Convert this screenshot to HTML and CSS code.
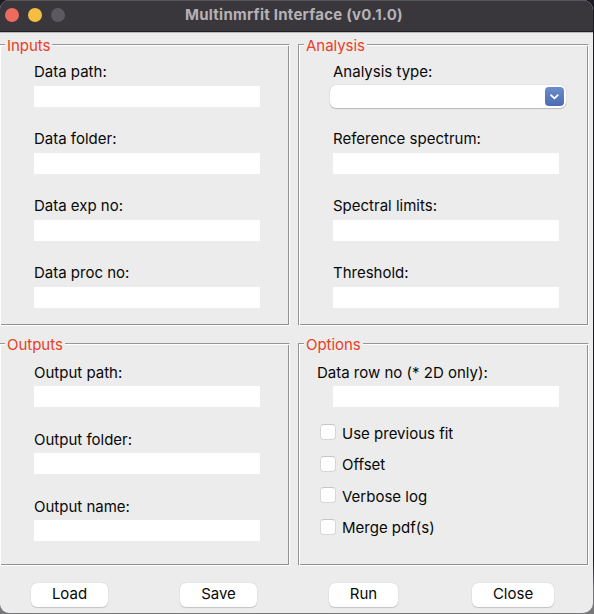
FILE: index.html
```html
<!DOCTYPE html>
<html lang="en">
<head>
<meta charset="utf-8">
<title>Multinmrfit Interface (v0.1.0)</title>
<link rel="stylesheet" href="styles.css">
</head>
<body>
<div class="window">
  <header class="titlebar">
    <div class="lights"><i class="light red"></i><i class="light yellow"></i><i class="light gray"></i></div>
    <h1>Multinmrfit Interface (v0.1.0)</h1>
  </header>
  <main class="panels">
    <section class="panel left upper">
      <h2>Inputs</h2>
      <div class="field"><label>Data path:</label><div class="input"></div></div>
      <div class="field"><label>Data folder:</label><div class="input"></div></div>
      <div class="field"><label>Data exp no:</label><div class="input"></div></div>
      <div class="field"><label>Data proc no:</label><div class="input"></div></div>
    </section>
    <section class="panel upper">
      <h2>Analysis</h2>
      <div class="field"><label>Analysis type:</label>
        <div class="select"><span class="arrow"><svg width="19" height="19" viewBox="0 0 19 19"><path d="M6 8.2 9.4 11.4 12.8 8.2" fill="none" stroke="#fff" stroke-width="1.8" stroke-linecap="round" stroke-linejoin="round"/></svg></span></div>
      </div>
      <div class="field"><label>Reference spectrum:</label><div class="input"></div></div>
      <div class="field"><label>Spectral limits:</label><div class="input"></div></div>
      <div class="field"><label>Threshold:</label><div class="input"></div></div>
    </section>
    <section class="panel left lower">
      <h2>Outputs</h2>
      <div class="field"><label>Output path:</label><div class="input"></div></div>
      <div class="field"><label>Output folder:</label><div class="input"></div></div>
      <div class="field"><label>Output name:</label><div class="input"></div></div>
    </section>
    <section class="panel lower">
      <h2>Options</h2>
      <div class="field"><label class="wide">Data row no (* 2D only):</label><div class="input"></div></div>
      <div class="checks">
        <label class="check"><i class="box"></i>Use previous fit</label>
        <label class="check"><i class="box"></i>Offset</label>
        <label class="check"><i class="box"></i>Verbose log</label>
        <label class="check"><i class="box"></i>Merge pdf(s)</label>
      </div>
    </section>
  </main>
  <footer class="actions">
    <button>Load</button><button>Save</button><button>Run</button><button class="close">Close</button>
  </footer>
</div>
</body>
</html>
```
FILE: styles.css
```css
* { box-sizing: border-box; }
body {
  margin: 0;
  height: 614px;
  overflow: hidden;
  background: linear-gradient(#1c1a24 0 560px, #77777a 590px);
  font: 15px/20px Inter, "Liberation Sans", sans-serif;
  color: #080808;
}
.window {
  width: 593px;
  height: 613px;
  overflow: hidden;
  background: #ececec;
  border-radius: 9px 10px 10px 9px;
}
.titlebar {
  height: 33px;
  display: grid;
  grid-template-columns: 185px 1fr;
  align-items: center;
  padding-bottom: 3px;
  background: #39363c;
  border-bottom: 1px solid #b9b8ba;
  box-shadow: inset 0 -1px #201e24, inset 0 1px #59565c;
}
.lights { display: flex; gap: 9px; padding-left: 5px; }
.light { width: 14px; height: 14px; border-radius: 50%; }
.red { background: #ec6a5e; }
.yellow { background: #f4bf40; }
.gray { background: #5c5a60; }
h1 { margin: 0; font-size: 15px; line-height: 20px; font-weight: 700; color: #b4b2b6; letter-spacing: .25px; white-space: nowrap; }
.panels {
  display: grid;
  grid-template-columns: 291px 291px;
  grid-template-rows: 282px 223px;
  column-gap: 8px;
  row-gap: 17px;
  margin: 11px 0 0 -1px;
}
.panel {
  border: 1px solid;
  border-color: #969696 #fff #fff #969696;
  box-shadow: inset 1px 1px #fff, inset -1px -1px #929292;
  padding-left: 34px;
}
h2 {
  width: max-content;
  height: 20px;
  margin: -10px 0 7px -29px;
  padding: 0 2px;
  font-size: 15px;
  line-height: 22px;
  font-weight: 400;
  letter-spacing: -.03px;
  background: #ececec;
  color: #ea3e25;
}
.field { height: 67px; }
.field label { display: block; height: 20px; letter-spacing: 0; white-space: nowrap; }
.input { width: 226px; height: 21px; margin-top: 4px; background: #fff; }
.lower h2 { margin-bottom: 9px; }
.lower .input { margin-top: 3px; }
.wide { margin-left: -16px; }
.select {
  display: flex;
  justify-content: flex-end;
  align-items: center;
  width: 236px;
  height: 23px;
  margin: 3px 0 0 -3px;
  padding-right: 2px;
  background: #fff;
  border-radius: 6px;
  box-shadow: 0 0 1px #aaa, 0 1px 1px #bbb;
}
.arrow { width: 19px; height: 19px; border-radius: 4px; background: linear-gradient(#6d8dca, #4c6ab3); }
.arrow svg { display: block; }
.checks { margin: -12px 0 0 -13px; }
.check { display: flex; align-items: center; height: 31.5px; }
.box { width: 16px; height: 16px; margin: -3px 6px 0 0; background: #fff; border: 1px solid #d9d6d6; border-top-color: #c8c5c5; border-radius: 4px; }
.actions {
  display: grid;
  grid-template-columns: 77px 77px 69px 82px;
  column-gap: 72px;
  margin: 17px 0 0 31px;
}
.close { margin-left: 2px; margin-right: -2px; }
button {
  height: 24px;
  padding: 0 0 2px;
  border: 0;
  border-radius: 6px;
  background: #fff;
  box-shadow: 0 0 1px #bbb, 0 1px 1px #c5c5c5;
  font: inherit;
  color: #080808;
}
```
